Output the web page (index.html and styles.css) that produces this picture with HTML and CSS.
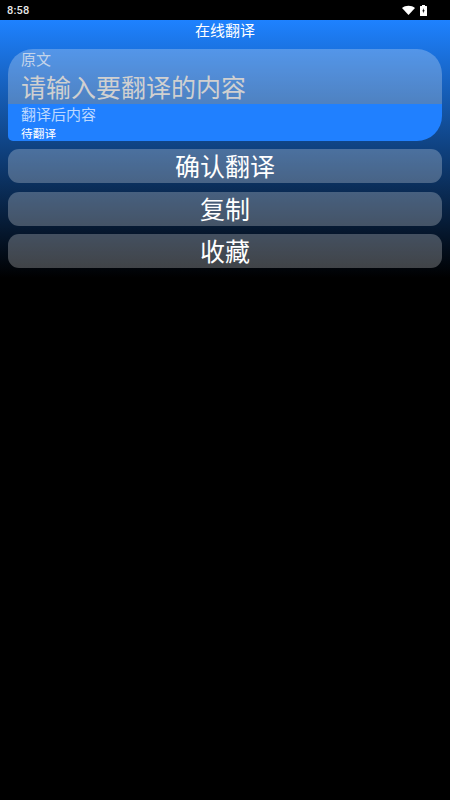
FILE: index.html
```html
<!DOCTYPE html>
<html lang="zh">
<head>
<meta charset="utf-8">
<title>在线翻译</title>
<link rel="stylesheet" href="styles.css">
</head>
<body>
<div class="status">
  <span class="time">8:58</span>
  <div class="status-icons">
    <svg class="wifi" width="13" height="10" viewBox="0 0 13 10"><path d="M0 3 C3.5 0 9.500 0 13 3 L6.500 10 Z" fill="#fff"/></svg>
    <svg class="battery" width="7" height="11" viewBox="0 0 7 11"><path d="M2 0h3v1h1.500a.5.5 0 0 1 .5.500V10.500a.5.5 0 0 1-.5.500H.5a.5.5 0 0 1-.5-.500V1.500A.5.5 0 0 1 .5 1H2z" fill="#fff"/><path d="M3.800 3 2.300 6.200h1L3 8.500 4.700 5.200h-1z" fill="#000"/></svg>
  </div>
</div>
<main class="screen">
  <h1 class="title">在线翻译</h1>
  <section class="card">
    <div class="input-area">
      <div class="input-label">原文</div>
      <div class="input-text">请输入要翻译的内容</div>
    </div>
    <div class="result-area">
      <div class="result-label">翻译后内容</div>
      <div class="result-text">待翻译</div>
    </div>
  </section>
  <div class="actions">
    <button class="btn">确认翻译</button>
    <button class="btn">复制</button>
    <button class="btn">收藏</button>
  </div>
</main>
</body>
</html>
```
FILE: styles.css
```css
* { box-sizing: border-box; }
html, body { margin: 0; height: 100%; background: #000; }
body {
  width: 450px;
  height: 800px;
  overflow: hidden;
  font-family: "Noto Sans CJK SC", "Noto Sans", sans-serif;
  color: #fff;
  display: flex;
  flex-direction: column;
}
.status {
  height: 20px;
  flex: none;
  background: #000;
  display: flex;
  align-items: center;
  justify-content: space-between;
  padding: 0 23px 0 7px;
}
.time {
  font-family: Roboto, sans-serif;
  font-size: 11px;
  font-weight: 500;
  letter-spacing: .2px;
  color: #e8e8e8;
}
.status-icons { display: flex; align-items: center; gap: 5px; }
.wifi, .battery { display: block; }
.screen {
  flex: 1;
  padding: 0 8px;
  background: linear-gradient(to bottom, #1e82ff 0, #000 258px);
}
.title {
  margin: 0 0 9px;
  height: 20px;
  font-size: 15px;
  font-weight: 400;
  line-height: 20px;
  text-align: center;
}
.card {
  height: 92px;
  border-radius: 25px 25px 25px 5px;
  overflow: hidden;
  display: flex;
  flex-direction: column;
}
.input-area {
  height: 55px;
  flex: none;
  padding: 0 13px;
  background: rgba(255, 255, 255, .25);
}
.input-label {
  font-size: 15px;
  line-height: 20px;
  margin-bottom: 1px;
  color: #c4d4ea;
}
.input-text {
  font-size: 25px;
  line-height: 33px;
  color: #d0d0d0;
}
.result-area {
  flex: 1;
  padding: 0 13px;
  background: #2080ff;
}
.result-label {
  font-size: 15px;
  line-height: 20px;
  margin-bottom: 2px;
  color: #bcd8ff;
}
.result-text {
  font-size: 11.700px;
  line-height: 13px;
}
.actions {
  margin-top: 8px;
  display: flex;
  flex-direction: column;
  gap: 8.500px;
}
.btn {
  height: 34px;
  border: 0;
  padding: 0 0 2px;
  border-radius: 11px;
  background: rgba(255, 255, 255, .25);
  color: #fff;
  font-family: inherit;
  font-size: 25px;
  line-height: 32px;
}
```
